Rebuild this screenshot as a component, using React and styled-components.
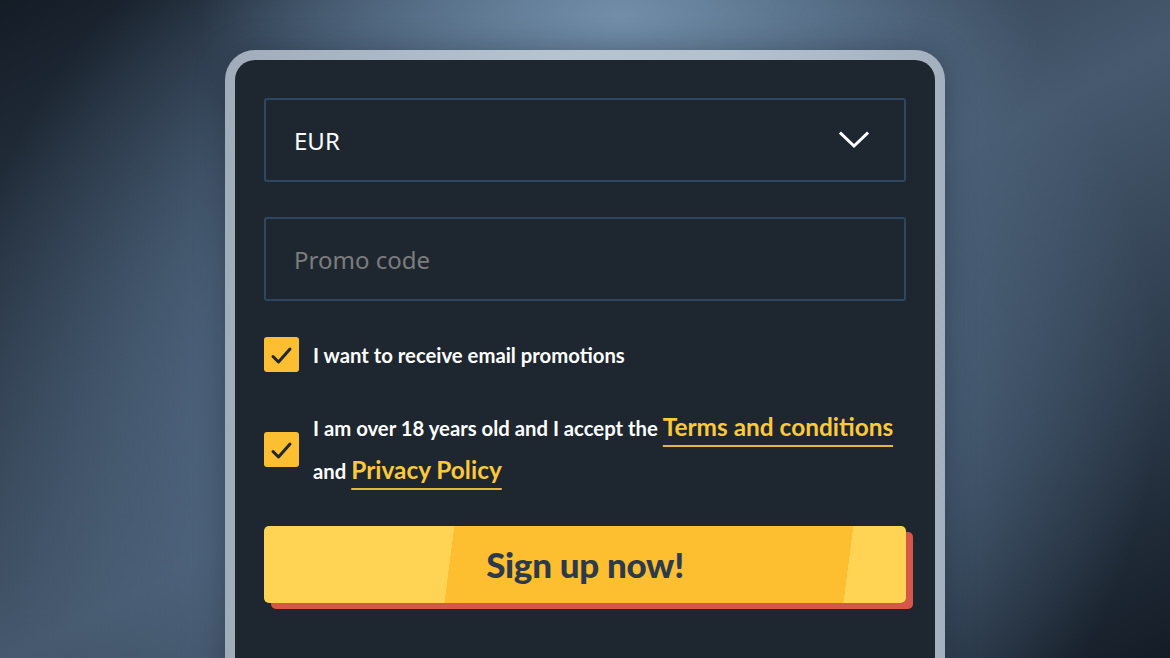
import React from 'react'
import styled, { createGlobalStyle } from 'styled-components'

const GlobalStyle = createGlobalStyle`
  html, body {
    margin: 0;
    padding: 0;
    height: 100%;
    overflow: hidden;
  }
  body {
    font-family: 'Lato', 'Noto Sans', sans-serif;
  }
`

const Stage = styled.div`
  width: 1170px;
  height: 658px;
  overflow: hidden;
  display: flex;
  justify-content: center;
  padding-top: 50px;
  box-sizing: border-box;
  background:
    radial-gradient(ellipse 420px 260px at 620px 20px, rgba(116, 145, 172, 0.95) 0%, rgba(104, 132, 160, 0.5) 55%, rgba(90, 116, 142, 0) 100%),
    radial-gradient(ellipse 600px 560px at 560px 380px, rgba(88, 112, 138, 0.95) 0%, rgba(80, 104, 130, 0.75) 60%, rgba(70, 92, 116, 0) 100%),
    linear-gradient(152deg, #141c26 0%, #2e3c4c 28%, #46596e 52%, #2c3a4a 78%, #141c26 100%);
`

const Frame = styled.div`
  width: 720px;
  height: 640px;
  box-sizing: border-box;
  padding: 10px 10px 0 10px;
  border-radius: 30px 30px 0 0;
  background: linear-gradient(90deg, #a0acb9 0%, #b6c4d2 45%, #b4c2d0 70%, #a4b0bd 100%);
  box-shadow: 0 0 30px rgba(16, 24, 34, 0.35);
`

const Panel = styled.div`
  height: 100%;
  box-sizing: border-box;
  background: #1e2730;
  border-radius: 20px 20px 0 0;
  padding: 38px 29px 0 29px;
  display: flex;
  flex-direction: column;
`

const Field = styled.div`
  height: 84px;
  box-sizing: border-box;
  border: 2px solid #2e4760;
  border-radius: 3px;
  display: flex;
  align-items: center;
  justify-content: space-between;
  padding: 0 35px 0 28px;
  margin-bottom: ${(p) => p.$gap || 0}px;
  font-family: 'Noto Sans', sans-serif;
  font-size: 24px;
  color: ${(p) => (p.$placeholder ? '#7c7c7c' : '#ffffff')};
`

const CheckRow = styled.div`
  display: flex;
  align-items: center;
  gap: 14px;
  margin-bottom: ${(p) => p.$gap || 0}px;
`

const Box = styled.div`
  width: 35px;
  height: 35px;
  flex: 0 0 35px;
  border-radius: 3px;
  background: #fcbf31;
  display: flex;
  align-items: center;
  justify-content: center;
`

const Label = styled.div`
  font-family: 'Lato', sans-serif;
  font-weight: 700;
  font-size: 20.3px;
  color: #ffffff;
  line-height: ${(p) => p.$lh || 24}px;
`

const Link = styled.span`
  font-size: 24.4px;
  color: #fdc93a;
  margin-left: 5px;
  text-decoration: underline;
  text-decoration-thickness: 2px;
  text-underline-offset: 9px;
  text-decoration-color: #e6b83a;
`

const Button = styled.button`
  height: 77px;
  width: 100%;
  border: 0;
  border-radius: 5px;
  cursor: pointer;
  box-shadow: 7px 6px 0 #d6564a;
  background: linear-gradient(97.4deg, #ffd455 29.2%, #fdbe30 29.2%, #fdbe30 90.4%, #ffd455 90.4%);
  font-family: 'Lato', sans-serif;
  font-weight: 900;
  font-size: 35px;
  color: #2c3a4b;
  letter-spacing: -0.3px;
  padding-bottom: 3px;
`

const Chevron = () => (
  <svg width="30" height="18" viewBox="0 0 30 18" fill="none">
    <path d="M2 2.5 L15 15 L28 2.5" stroke="#fff" strokeWidth="3" strokeLinecap="square" />
  </svg>
)

const Check = () => (
  <svg width="35" height="35" viewBox="0 0 35 35" fill="none">
    <path d="M9 19.5 L14.5 25 L26 12" stroke="#1e2730" strokeWidth="3" strokeLinecap="round" strokeLinejoin="round" />
  </svg>
)

export default function App() {
  return (
    <>
      <GlobalStyle />
      <Stage>
        <Frame>
          <Panel>
            <Field $gap={35}>
              <span>EUR</span>
              <Chevron />
            </Field>
            <Field $placeholder $gap={36}>
              <span>Promo code</span>
            </Field>
            <CheckRow $gap={34}>
              <Box><Check /></Box>
              <Label>I want to receive email promotions</Label>
            </CheckRow>
            <CheckRow $gap={34}>
              <Box><Check /></Box>
              <Label $lh={42}>
                I am over 18 years old and I accept the<Link>Terms and conditions</Link>
                <br />
                and<Link>Privacy Policy</Link>
              </Label>
            </CheckRow>
            <Button type="button">Sign up now!</Button>
          </Panel>
        </Frame>
      </Stage>
    </>
  )
}
